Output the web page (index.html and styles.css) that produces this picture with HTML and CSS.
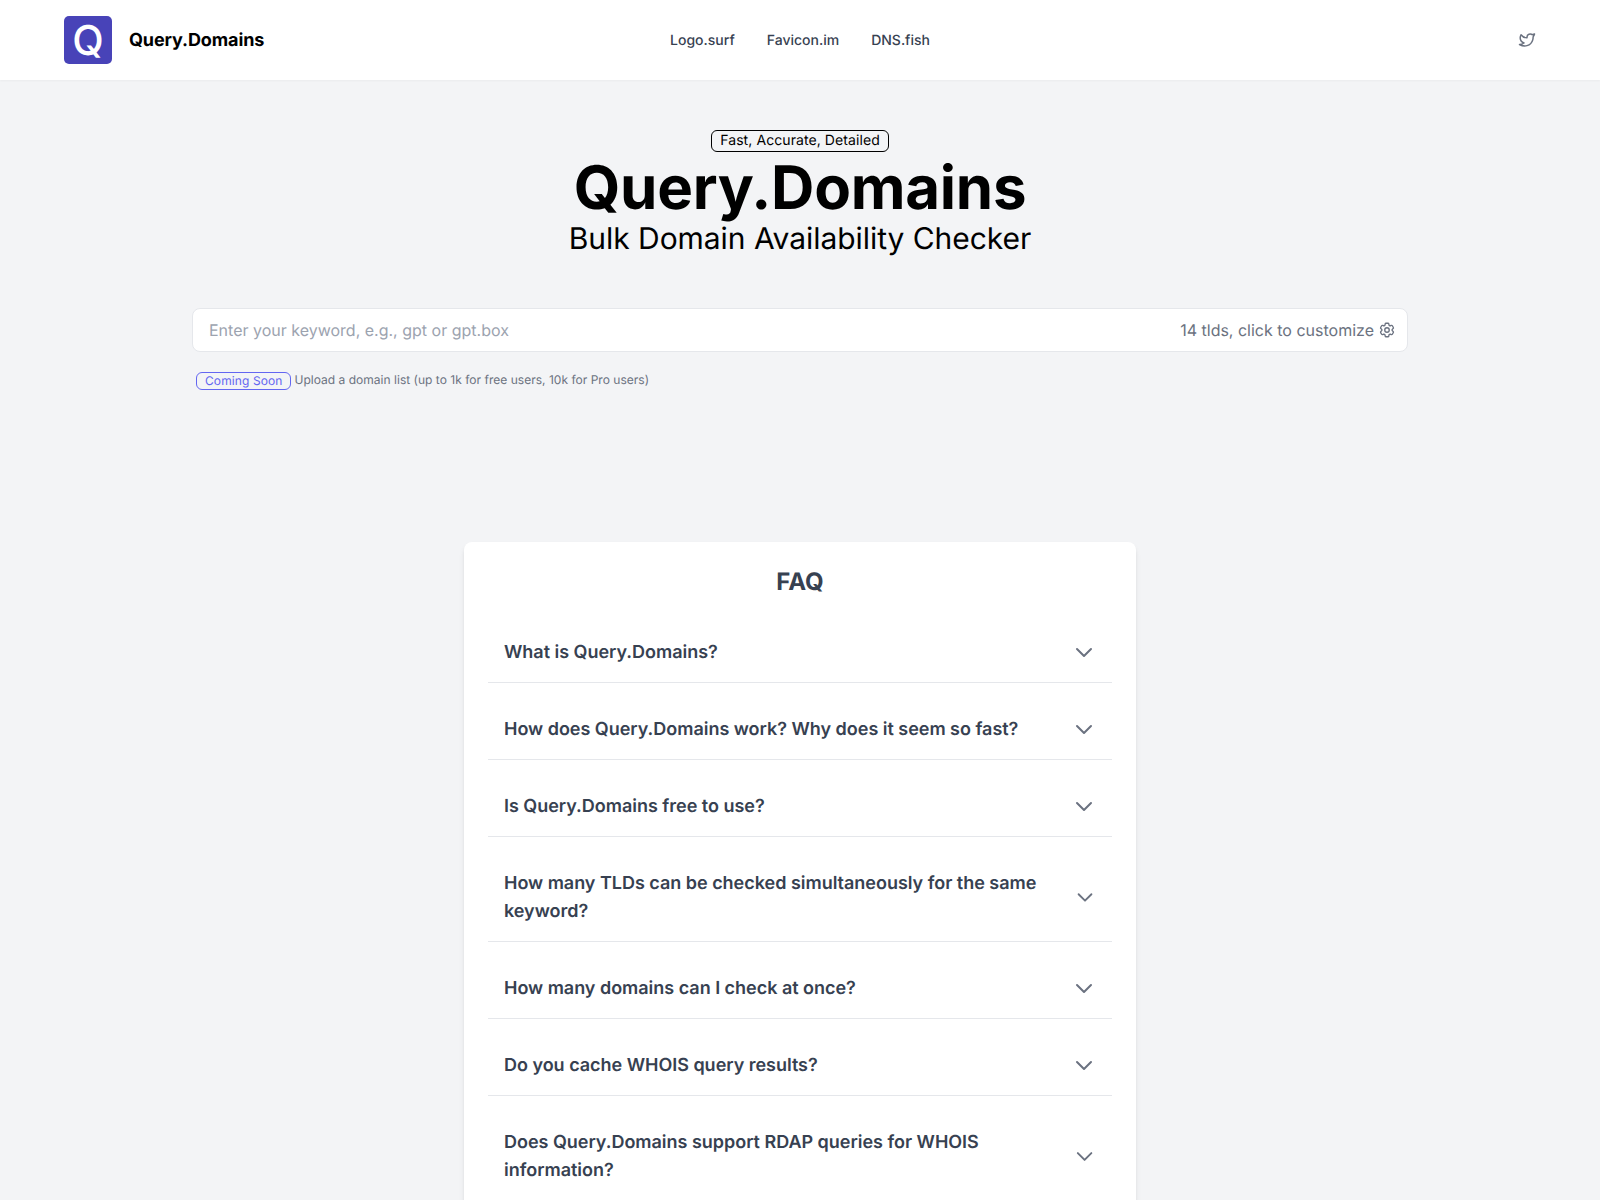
FILE: index.html
```html
<!DOCTYPE html>
<html lang="en">
<head>
    <meta charset="UTF-8">
    <meta name="viewport" content="width=device-width, initial-scale=1.0">
    <title>Query.Domains</title>
    <link rel="stylesheet" href="styles.css">
</head>
<body>
    <header class="topbar">
        <a class="brand" href="#">
            <span class="brand-logo">Q</span>
            <span class="brand-name">Query.Domains</span>
        </a>
        <nav class="topnav">
            <a href="#">Logo.surf</a>
            <a href="#">Favicon.im</a>
            <a href="#">DNS.fish</a>
        </nav>
        <a class="social" href="#" aria-label="Twitter">
            <svg viewBox="0 0 24 24" width="18" height="18" fill="none" stroke="currentColor" stroke-width="2" stroke-linecap="round" stroke-linejoin="round"><path d="M22 4.010c-1 .490-1.980.689-3 .990-1.121-1.265-2.783-1.335-4.380-.737s-2.643 2.060-2.620 3.737v1c-3.245.083-6.135-1.395-8-4 0 0-4.182 7.433 4 11-1.872 1.247-3.739 2.088-6 2 3.308 1.803 6.913 2.423 10.034 1.517 3.580-1.040 6.522-3.723 7.651-7.742a13.840 13.840 0 0 0 .497-3.753c0-.249 1.510-2.772 1.818-4.013z"/></svg>
        </a>
    </header>

    <main>
        <section class="hero">
            <span class="pill">Fast, Accurate, Detailed</span>
            <h1>Query.Domains</h1>
            <p class="subtitle">Bulk Domain Availability Checker</p>
        </section>

        <section class="search">
            <div class="search-box">
                <input type="text" placeholder="Enter your keyword, e.g., gpt or gpt.box">
                <button class="tld-btn" type="button">
                    14 tlds, click to customize
                    <svg viewBox="0 0 24 24" width="18" height="18" fill="none" stroke="currentColor" stroke-width="1.8" stroke-linecap="round" stroke-linejoin="round"><path d="M9.590 3.940c.09-.54.560-.94 1.110-.94h2.590c.55 0 1.020.4 1.110.94l.210 1.280c.06.370.31.680.66.870.08.040.15.090.23.130.320.190.710.250 1.060.120l1.220-.460c.52-.190 1.100.020 1.370.5l1.300 2.240c.27.480.16 1.090-.26 1.440l-1 .830c-.290.240-.430.610-.420.980v.270c-.01.370.130.740.420.980l1 .830c.420.350.530.960.26 1.440l-1.300 2.240c-.27.480-.850.690-1.370.5l-1.220-.460c-.350-.130-.740-.070-1.060.120-.08.040-.15.090-.23.130-.350.190-.600.500-.660.870l-.210 1.280c-.09.540-.560.940-1.110.94h-2.590c-.550 0-1.020-.4-1.110-.94l-.210-1.280c-.06-.370-.310-.680-.660-.870-.08-.040-.150-.090-.230-.130-.320-.190-.710-.250-1.060-.120l-1.220.460c-.520.190-1.100-.020-1.370-.5l-1.300-2.240c-.27-.480-.160-1.090.260-1.440l1-.830c.290-.240.430-.610.420-.980v-.270c.01-.370-.130-.740-.420-.980l-1-.830c-.420-.350-.530-.960-.26-1.440l1.300-2.240c.27-.480.850-.690 1.370-.5l1.220.460c.350.130.740.070 1.060-.120.08-.040.150-.090.230-.130.350-.190.600-.500.660-.870z"/><circle cx="12" cy="12" r="3"/></svg>
                </button>
            </div>
            <div class="upload">
                <span class="soon">Coming Soon</span>
                <span class="upload-note">Upload a domain list (up to 1k for free users, 10k for Pro users)</span>
            </div>
        </section>

        <section class="faq">
            <h2>FAQ</h2>
            <div class="faq-row">
                <span>What is Query.Domains?</span>
                <svg class="chev" viewBox="0 0 24 24" fill="none" stroke="currentColor" stroke-width="2" stroke-linecap="round" stroke-linejoin="round"><path d="M19 9l-7 7-7-7"/></svg>
            </div>
            <div class="faq-row">
                <span>How does Query.Domains work? Why does it seem so fast?</span>
                <svg class="chev" viewBox="0 0 24 24" fill="none" stroke="currentColor" stroke-width="2" stroke-linecap="round" stroke-linejoin="round"><path d="M19 9l-7 7-7-7"/></svg>
            </div>
            <div class="faq-row">
                <span>Is Query.Domains free to use?</span>
                <svg class="chev" viewBox="0 0 24 24" fill="none" stroke="currentColor" stroke-width="2" stroke-linecap="round" stroke-linejoin="round"><path d="M19 9l-7 7-7-7"/></svg>
            </div>
            <div class="faq-row">
                <span>How many TLDs can be checked simultaneously for the same keyword?</span>
                <svg class="chev" viewBox="0 0 24 24" fill="none" stroke="currentColor" stroke-width="2" stroke-linecap="round" stroke-linejoin="round"><path d="M19 9l-7 7-7-7"/></svg>
            </div>
            <div class="faq-row">
                <span>How many domains can I check at once?</span>
                <svg class="chev" viewBox="0 0 24 24" fill="none" stroke="currentColor" stroke-width="2" stroke-linecap="round" stroke-linejoin="round"><path d="M19 9l-7 7-7-7"/></svg>
            </div>
            <div class="faq-row">
                <span>Do you cache WHOIS query results?</span>
                <svg class="chev" viewBox="0 0 24 24" fill="none" stroke="currentColor" stroke-width="2" stroke-linecap="round" stroke-linejoin="round"><path d="M19 9l-7 7-7-7"/></svg>
            </div>
            <div class="faq-row">
                <span>Does Query.Domains support RDAP queries for WHOIS information?</span>
                <svg class="chev" viewBox="0 0 24 24" fill="none" stroke="currentColor" stroke-width="2" stroke-linecap="round" stroke-linejoin="round"><path d="M19 9l-7 7-7-7"/></svg>
            </div>
        </section>
    </main>
</body>
</html>
```

FILE: styles.css
```css
* {
    box-sizing: border-box;
}
html {
    overflow: hidden;
    height: 1200px;
}
body {
    margin: 0;
    height: 1200px;
    overflow: hidden;
    background-color: #f3f4f6;
    font-family: Inter, sans-serif;
    color: #000;
    text-rendering: geometricPrecision;
}
a {
    color: inherit;
    text-decoration: none;
}
/* Header */
.topbar {
    display: grid;
    grid-template-columns: 1fr auto 1fr;
    align-items: center;
    height: 80px;
    padding: 0 64px;
    background-color: #fff;
    box-shadow: 0 1px 2px rgba(0, 0, 0, 0.04);
}
.brand {
    display: flex;
    align-items: center;
    gap: 16px;
}
.brand-logo {
    display: flex;
    align-items: center;
    justify-content: center;
    width: 48px;
    height: 48px;
    border-radius: 5px;
    background-color: #4843b8;
    color: #fff;
    font-size: 41px;
    font-weight: 500;
}
.brand-name {
    font-size: 18px;
    font-weight: 700;
    letter-spacing: -0.12px;
    margin-left: 1px;
}
.topnav {
    display: flex;
    gap: 32px;
    font-size: 14px;
    font-weight: 500;
    color: #374151;
}
.social {
    display: flex;
    justify-self: end;
    color: #6b7280;
}
/* Hero */
.hero {
    display: flex;
    flex-direction: column;
    align-items: center;
    padding-top: 50px;
}
.pill {
    padding: 0 8px;
    border: 1px solid #000;
    border-radius: 6px;
    font-size: 14px;
    line-height: 20px;
    letter-spacing: 0.08px;
}
h1 {
    margin: 2px 0 0;
    font-size: 60px;
    font-weight: 700;
    line-height: 68px;
    letter-spacing: -0.25px;
}
.subtitle {
    margin: -1px 0 0;
    font-size: 30px;
    line-height: 36px;
    letter-spacing: -0.05px;
}
/* Search */
.search {
    width: 1216px;
    margin: 51px auto 0;
}
.search-box {
    display: flex;
    align-items: center;
    height: 44px;
    padding: 0 11px 0 16px;
    border: 1px solid #e5e7eb;
    border-radius: 8px;
    background-color: #fff;
}
.search-box input {
    flex: 1;
    border: none;
    outline: none;
    padding: 0;
    font-family: inherit;
    font-size: 16px;
    text-rendering: geometricPrecision;
}
.search-box input::placeholder {
    color: #9ca3af;
}
.tld-btn {
    display: flex;
    align-items: center;
    gap: 4px;
    padding: 0;
    border: none;
    background: none;
    font-family: inherit;
    font-size: 16px;
    color: #6b7280;
    text-rendering: geometricPrecision;
}
.upload {
    display: flex;
    align-items: center;
    gap: 3px;
    margin-top: 20px;
    padding-left: 4px;
    font-size: 12px;
    line-height: 16px;
    color: #6b7280;
}
.upload-note {
    margin-top: -2px;
    letter-spacing: 0.02px;
}
.soon {
    padding: 0 8px;
    border: 1px solid #6366f1;
    border-radius: 6px;
    color: #6366f1;
    letter-spacing: 0.1px;
}
/* FAQ */
.faq {
    width: 672px;
    margin: 152px auto 0;
    padding: 24px;
    border-radius: 8px;
    background-color: #fff;
    box-shadow: 0 4px 6px -1px rgba(0, 0, 0, 0.1), 0 2px 4px -2px rgba(0, 0, 0, 0.1);
}
h2 {
    margin: 0 0 8px;
    text-align: center;
    font-size: 24px;
    font-weight: 700;
    line-height: 32px;
    color: #374151;
}
.faq-row {
    display: flex;
    align-items: center;
    justify-content: space-between;
    padding: 31px 16px 15px;
    border-bottom: 1px solid #e5e7eb;
    font-size: 18px;
    font-weight: 600;
    line-height: 28px;
    letter-spacing: -0.02px;
    color: #374151;
}
.faq-row span {
    padding-top: 2px;
}
.chev {
    width: 24px;
    height: 24px;
    color: #6b7280;
}
```
